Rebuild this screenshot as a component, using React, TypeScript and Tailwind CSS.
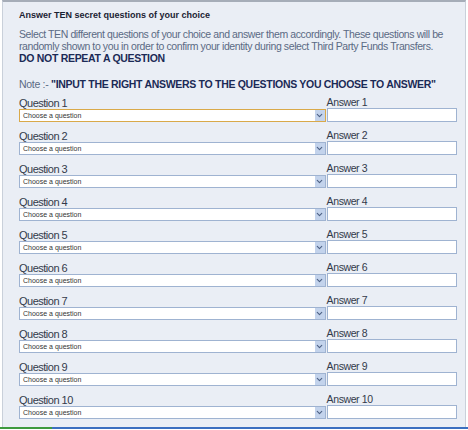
import { ChevronDown } from "lucide-react";

const rows = Array.from({ length: 10 }, (_, i) => i + 1);

function QuestionRow({ n }: { n: number }) {
    const focused = n === 1;
    return (
        <div className="flex items-end h-[33px]">
            <div className="flex flex-col w-[308px]">
                <span className="text-[11px] leading-[12px] tracking-[-0.5px] text-[#333a4a]">Question {n}</span>
                <div className={`flex items-center h-[13px] bg-white border ${focused ? "border-[#d9a949]" : "border-[#9fb3d1]"}`}>
                    <span className="flex-1 pl-[3px] text-[7px] leading-[11px] text-[#333]">Choose a question</span>
                    <span className="flex items-center justify-center w-[11px] h-[11px] bg-[#c3d3ec] border-l border-white">
                        <ChevronDown size={9} strokeWidth={3} className="text-[#4d6185]" />
                    </span>
                </div>
            </div>
            <div className="flex flex-col ml-[1px] w-[131px]">
                <span className="text-[10.5px] leading-[12px] tracking-[-0.4px] text-[#333a4a]">Answer {n}</span>
                <div className="h-[14px] bg-white border border-[#9fb3d1]" />
            </div>
        </div>
    )
}

export default function App() {
    return (
        <div className="w-[468px] h-[430px] bg-white flex flex-col" style={{ fontFamily: '"Liberation Sans", Arial, sans-serif' }}>
            <div className="flex-1 mx-[2px] border-t-2 border-t-[#a6adb8] border-x border-x-[#c9d0da] bg-[#eaeef5] pl-[16px] pr-[8px] pt-[7px]">
                <h2 className="text-[9px] leading-[12px] font-bold text-[#1a2233]">Answer TEN secret questions of your choice</h2>
                <p className="mt-[7px] text-[10.5px] leading-[12px] text-[#5a6a84] tracking-[-0.4px]">
                    Select TEN different questions of your choice and answer them accordingly. These questions will be randomly shown to you in order to confirm your identity during select Third Party Funds Transfers.
                </p>
                <p className="text-[10.5px] leading-[12px] font-bold text-[#1b2a55] tracking-[-0.3px]">DO NOT REPEAT A QUESTION</p>
                <p className="mt-[14px] text-[10.5px] leading-[12px] text-[#5a6a84] tracking-[-0.3px]">
                    Note :- <span className="font-bold text-[#1b2a55]">"INPUT THE RIGHT ANSWERS TO THE QUESTIONS YOU CHOOSE TO ANSWER"</span>
                </p>
                <div className="flex flex-col -mt-[1px]">
                    {rows.map(n => <QuestionRow key={n} n={n} />)}
                </div>
            </div>
            <div className="flex h-[2px] mb-[1px]">
                <div className="w-[52px] bg-[#3e9a3e]" />
                <div className="flex-1 bg-[#3b6fc0]" />
            </div>
        </div>
    )
}
